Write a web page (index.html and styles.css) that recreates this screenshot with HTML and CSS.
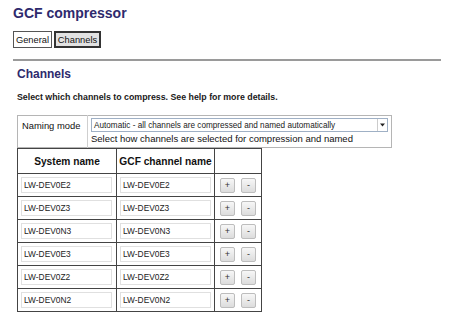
FILE: index.html
```html
<!DOCTYPE html>
<html>
<head>
<meta charset="utf-8">
<link rel="stylesheet" href="styles.css">
</head>
<body>
<h1 class="title">GCF compressor</h1>
<div class="tabs">
  <button class="tab">General</button>
  <button class="tab tab-active">Channels</button>
</div>
<div class="rule"></div>
<section class="panel">
  <h2 class="heading">Channels</h2>
  <p class="intro">Select which channels to compress. See help for more details.</p>
  <table class="mode">
    <tr>
      <td class="mode-label">Naming mode</td>
      <td class="mode-field">
        <div class="select">
          <span class="select-text">Automatic - all channels are compressed and named automatically</span>
          <span class="select-arrow"><svg width="7" height="4" viewBox="0 0 7 4"><path d="M1 0.5h5l-2.5 3z" fill="#222"/></svg></span>
        </div>
        <div class="mode-help">Select how channels are selected for compression and named</div>
      </td>
    </tr>
  </table>
  <table class="channels">
    <thead>
      <tr><th class="col-sys">System name</th><th class="col-gcf">GCF channel name</th><th class="col-act"></th></tr>
    </thead>
    <tbody>
      <tr><td><input class="field" value="LW-DEV0E2"></td><td><input class="field" value="LW-DEV0E2"></td><td class="acts"><button class="btn">+</button><button class="btn">-</button></td></tr>
      <tr><td><input class="field" value="LW-DEV0Z3"></td><td><input class="field" value="LW-DEV0Z3"></td><td class="acts"><button class="btn">+</button><button class="btn">-</button></td></tr>
      <tr><td><input class="field" value="LW-DEV0N3"></td><td><input class="field" value="LW-DEV0N3"></td><td class="acts"><button class="btn">+</button><button class="btn">-</button></td></tr>
      <tr><td><input class="field" value="LW-DEV0E3"></td><td><input class="field" value="LW-DEV0E3"></td><td class="acts"><button class="btn">+</button><button class="btn">-</button></td></tr>
      <tr><td><input class="field" value="LW-DEV0Z2"></td><td><input class="field" value="LW-DEV0Z2"></td><td class="acts"><button class="btn">+</button><button class="btn">-</button></td></tr>
      <tr><td><input class="field" value="LW-DEV0N2"></td><td><input class="field" value="LW-DEV0N2"></td><td class="acts"><button class="btn">+</button><button class="btn">-</button></td></tr>
    </tbody>
  </table>
</section>
</body>
</html>
```
FILE: styles.css
```css
html, body {
  margin: 0;
  padding: 0;
  background: #fff;
}
body {
  font-family: "Liberation Sans", Arial, sans-serif;
  color: #111;
  font-size: 10px;
}
.title {
  margin: 0;
  padding: 3px 0 0 13px;
  font-size: 14px;
  line-height: 20px;
  font-weight: bold;
  color: #2e2a6d;
  transform-origin: left;
}
.tabs {
  display: flex;
  gap: 2px;
  margin: 8px 0 0 13px;
}
.tab {
  font-family: inherit;
  font-size: 9.3px;
  color: #111;
  background: #fff;
  border: 1px solid #555;
  padding: 0;
  height: 17px;
  width: 39px;
  margin: 0;
  text-align: center;
}
.tab-active {
  width: 47px;
  background: #e2e2e2;
  border: 2px solid #333;
}
.rule {
  margin: 11px 13px 0 13px;
  height: 2px;
  background: #9a9a9a;
}
.panel {
  padding: 0 0 0 17px;
}
.heading {
  margin: 5px 0 0 0;
  font-size: 12px;
  line-height: 16px;
  font-weight: bold;
  color: #2e2a6d;
}
.intro {
  margin: 9px 0 0 0;
  font-size: 8.8px;
  line-height: 12px;
  font-weight: bold;
  color: #1a1a1a;
}
.mode {
  margin-top: 12px;
  border-collapse: collapse;
  border: 1px solid #b5b5b5;
  width: 375px;
}
.mode td {
  padding: 0;
  vertical-align: top;
}
.mode-label {
  width: 65px;
  border-right: 1px solid #cfcfcf;
  padding: 4px 0 0 4px !important;
  font-size: 9.4px;
  line-height: 12px;
  height: 27px;
}
.mode-field {
  padding: 2px 3px 2px 3px !important;
}
.select {
  display: flex;
  align-items: center;
  height: 12px;
  border: 1px solid #9fb0c5;
  background: #fff;
}
.select-text {
  flex: 1;
  font-size: 8.2px;
  padding-left: 2px;
  color: #222;
  white-space: nowrap;
  overflow: hidden;
}
.select-arrow {
  width: 9px;
  display: flex;
  justify-content: center;
  align-items: center;
  border-left: 1px solid #ccc;
  height: 12px;
}
.mode-help {
  margin-top: 1px;
  font-size: 9.5px;
  line-height: 12px;
}
.channels {
  border-collapse: collapse;
  border: 1px solid #444;
}
.channels th {
  border: 1px solid #444;
  height: 24px;
  padding: 0;
  font-size: 10.2px;
  font-weight: bold;
  text-align: center;
}
.col-sys { width: 98px; }
.col-gcf { width: 96px; }
.col-act { width: 46px; }
.channels td {
  border: 1px solid #444;
  height: 22px;
  padding: 0 3px;
}
.field {
  box-sizing: border-box;
  width: 91px;
  height: 16px;
  border: 1px solid #e0e0e0;
  padding: 0 2px;
  font-family: inherit;
  font-size: 8.4px;
  color: #222;
  display: block;
}
.acts {
  padding: 0 5px !important;
}
.acts .btn + .btn {
  margin-left: 6px;
}
.btn {
  width: 15px;
  height: 15px;
  padding: 0;
  margin: 0;
  font-family: inherit;
  font-size: 9px;
  line-height: 11px;
  color: #333;
  border: 1px solid #bdbdbd;
  border-radius: 2px;
  background: linear-gradient(#f7f7f7, #dcdcdc);
  vertical-align: middle;
}
```
